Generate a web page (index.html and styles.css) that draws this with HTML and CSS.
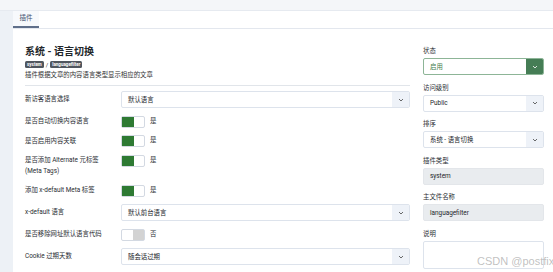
FILE: index.html
```html
<!DOCTYPE html>
<html lang="zh">
<head>
<meta charset="utf-8">
<title>插件</title>
<link rel="stylesheet" href="styles.css">
</head>
<body>
<div class="topbar"></div>
<div class="main">
  <div class="card">
    <div class="tabs"><div class="tab">插件</div></div>
    <div class="content">
      <div class="left">
        <h1 class="title">系统 - 语言切换</h1>
        <div class="badges"><span class="badge">system</span><span class="slash">/</span><span class="badge">languagefilter</span></div>
        <p class="desc">插件根据文章的内容语言类型显示相应的文章</p>
        <div class="divider"></div>
        <div class="rows">
          <div class="row sel-row">
            <div class="label">新访客语言选择</div>
            <div class="select"><span class="val">默认语言</span><span class="chev"><svg viewBox="0 0 8 6" width="6" height="4"><path d="M1 1.5 L4 4.5 L7 1.5" fill="none" stroke="#444" stroke-width="1.2"/></svg></span></div>
          </div>
          <div class="row tog-row">
            <div class="label">是否自动切换内容语言</div>
            <div class="toggle on"><span class="knob"></span></div><span class="tog-text">是</span>
          </div>
          <div class="row tog-row">
            <div class="label">是否启用内容关联</div>
            <div class="toggle on"><span class="knob"></span></div><span class="tog-text">是</span>
          </div>
          <div class="row tog-row">
            <div class="label">是否添加 Alternate 元标签<br>(Meta Tags)</div>
            <div class="toggle on"><span class="knob"></span></div><span class="tog-text">是</span>
          </div>
          <div class="row tog-row">
            <div class="label">添加 x-default Meta 标签</div>
            <div class="toggle on"><span class="knob"></span></div><span class="tog-text">是</span>
          </div>
          <div class="row sel-row">
            <div class="label">x-default 语言</div>
            <div class="select"><span class="val">默认前台语言</span><span class="chev"><svg viewBox="0 0 8 6" width="6" height="4"><path d="M1 1.5 L4 4.5 L7 1.5" fill="none" stroke="#444" stroke-width="1.2"/></svg></span></div>
          </div>
          <div class="row tog-row">
            <div class="label">是否移除网址默认语言代码</div>
            <div class="toggle off"><span class="knob"></span></div><span class="tog-text">否</span>
          </div>
          <div class="row sel-row">
            <div class="label">Cookie 过期天数</div>
            <div class="select"><span class="val">随会话过期</span><span class="chev"><svg viewBox="0 0 8 6" width="6" height="4"><path d="M1 1.5 L4 4.5 L7 1.5" fill="none" stroke="#444" stroke-width="1.2"/></svg></span></div>
          </div>
        </div>
      </div>
      <div class="right">
        <div class="group">
          <div class="rlabel">状态</div>
          <div class="select status"><span class="val">启用</span><span class="chev"><svg viewBox="0 0 8 6" width="6" height="4"><path d="M1 1.5 L4 4.5 L7 1.5" fill="none" stroke="#fff" stroke-width="1.2"/></svg></span></div>
        </div>
        <div class="group">
          <div class="rlabel">访问级别</div>
          <div class="select"><span class="val">Public</span><span class="chev"><svg viewBox="0 0 8 6" width="6" height="4"><path d="M1 1.5 L4 4.5 L7 1.5" fill="none" stroke="#444" stroke-width="1.2"/></svg></span></div>
        </div>
        <div class="group">
          <div class="rlabel">排序</div>
          <div class="select"><span class="val">系统 - 语言切换</span><span class="chev"><svg viewBox="0 0 8 6" width="6" height="4"><path d="M1 1.5 L4 4.5 L7 1.5" fill="none" stroke="#444" stroke-width="1.2"/></svg></span></div>
        </div>
        <div class="group">
          <div class="rlabel">插件类型</div>
          <div class="input ro">system</div>
        </div>
        <div class="group">
          <div class="rlabel">主文件名称</div>
          <div class="input ro">languagefilter</div>
        </div>
        <div class="group">
          <div class="rlabel">说明</div>
          <div class="textarea"></div>
        </div>
      </div>
    </div>
  </div>
</div>
<div class="watermark">CSDN @postfix</div>
</body>
</html>
```
FILE: styles.css
```css
html, body {
  margin: 0;
  padding: 0;
}
body {
  width: 553px;
  height: 272px;
  overflow: hidden;
  background: #edf1f6;
  font-family: Roboto, "Noto Sans CJK SC", sans-serif;
  color: #22262a;
  position: relative;
}
.topbar {
  height: 11px;
  background: #f4f6f9;
  border-bottom: 1px solid #e6eaf0;
  box-sizing: border-box;
}
.main {
  padding-left: 13px;
}
.card {
  background: #fff;
  height: 261px;
}
.tabs {
  height: 18px;
  border-bottom: 1px solid #e3e7ee;
  box-sizing: border-box;
  display: flex;
}
.tab {
  padding: 0 6px;
  width: 14px;
  font-size: 6.5px;
  line-height: 15px;
  color: #3d4f6e;
  border-bottom: 2px solid #5f6f8a;
  background: #f7f9fc;
  text-align: center;
}
.content {
  display: grid;
  grid-template-columns: 385px 121px;
  column-gap: 13px;
  padding: 17px 9px 0 12px;
}
.left {
  margin-top: -1px;
}
.title {
  margin: 0;
  font-size: 10px;
  line-height: 13px;
  font-weight: 700;
  color: #22262a;
}
.badges {
  margin-top: 2px;
  height: 9px;
  display: flex;
  align-items: center;
}
.badge {
  background: #50565e;
  color: #fff;
  font-size: 4.5px;
  line-height: 7px;
  padding: 0 2px;
  border-radius: 1.5px;
  font-weight: 700;
}
.slash {
  font-size: 6px;
  margin: 0 2px;
  color: #333;
}
.desc {
  margin: 1px 0 0;
  font-size: 6.4px;
  line-height: 10px;
  color: #333;
}
.divider {
  margin-top: 5px;
  margin-bottom: 5px;
  height: 1px;
  background: #e1e5ea;
}
.rows {
  display: flex;
  flex-direction: column;
  gap: 7.5px;
}
.row {
  display: flex;
  align-items: flex-start;
}
.label {
  width: 96px;
  flex: none;
  font-size: 6.4px;
  line-height: 11px;
  color: #2a2e33;
}
.sel-row .label {
  padding-top: 3px;
}
.tog-row .label {
  padding-top: 0.5px;
}
.select, .input, .textarea {
  box-sizing: border-box;
  border: 1px solid #dde3ec;
  border-radius: 2px;
  background: #fff;
  height: 17px;
  display: flex;
  align-items: center;
  font-size: 6.4px;
  color: #22262a;
  overflow: hidden;
}
.row .select {
  flex: 1;
}
.select .val {
  flex: 1;
  padding-left: 6px;
}
.select .chev {
  width: 17px;
  height: 100%;
  background: #eef2f8;
  display: flex;
  align-items: center;
  justify-content: center;
}
.select.status {
  border-color: #8db597;
}
.select.status .val {
  color: #3f7b4c;
}
.select.status .chev {
  background: #457d55;
}
.toggle {
  width: 24px;
  height: 12px;
  box-sizing: border-box;
  border: 1px solid #d3d9e2;
  border-radius: 2px;
  display: flex;
  background: #fff;
  flex: none;
}
.toggle .knob {
  width: 12px;
  height: 100%;
}
.toggle.on .knob {
  background: #2e7a33;
}
.toggle.off {
  justify-content: flex-end;
}
.toggle.off .knob {
  background: #d3d3d3;
  width: 11px;
}
.tog-text {
  margin-left: 5px;
  font-size: 6.4px;
  line-height: 11px;
  color: #2a2e33;
}
.right {
  display: flex;
  flex-direction: column;
  gap: 7.5px;
}
.rlabel {
  font-size: 6.4px;
  line-height: 11px;
  margin-bottom: 1px;
  color: #2a2e33;
}
.input.ro {
  background: #e9ecef;
  border-color: #e3e6ea;
  padding-left: 6px;
}
.textarea {
  height: 28px;
}
.watermark {
  position: absolute;
  left: 477px;
  top: 255px;
  font-family: "Liberation Sans", sans-serif;
  font-size: 11px;
  color: rgba(140, 140, 140, 0.55);
  white-space: nowrap;
}
```
